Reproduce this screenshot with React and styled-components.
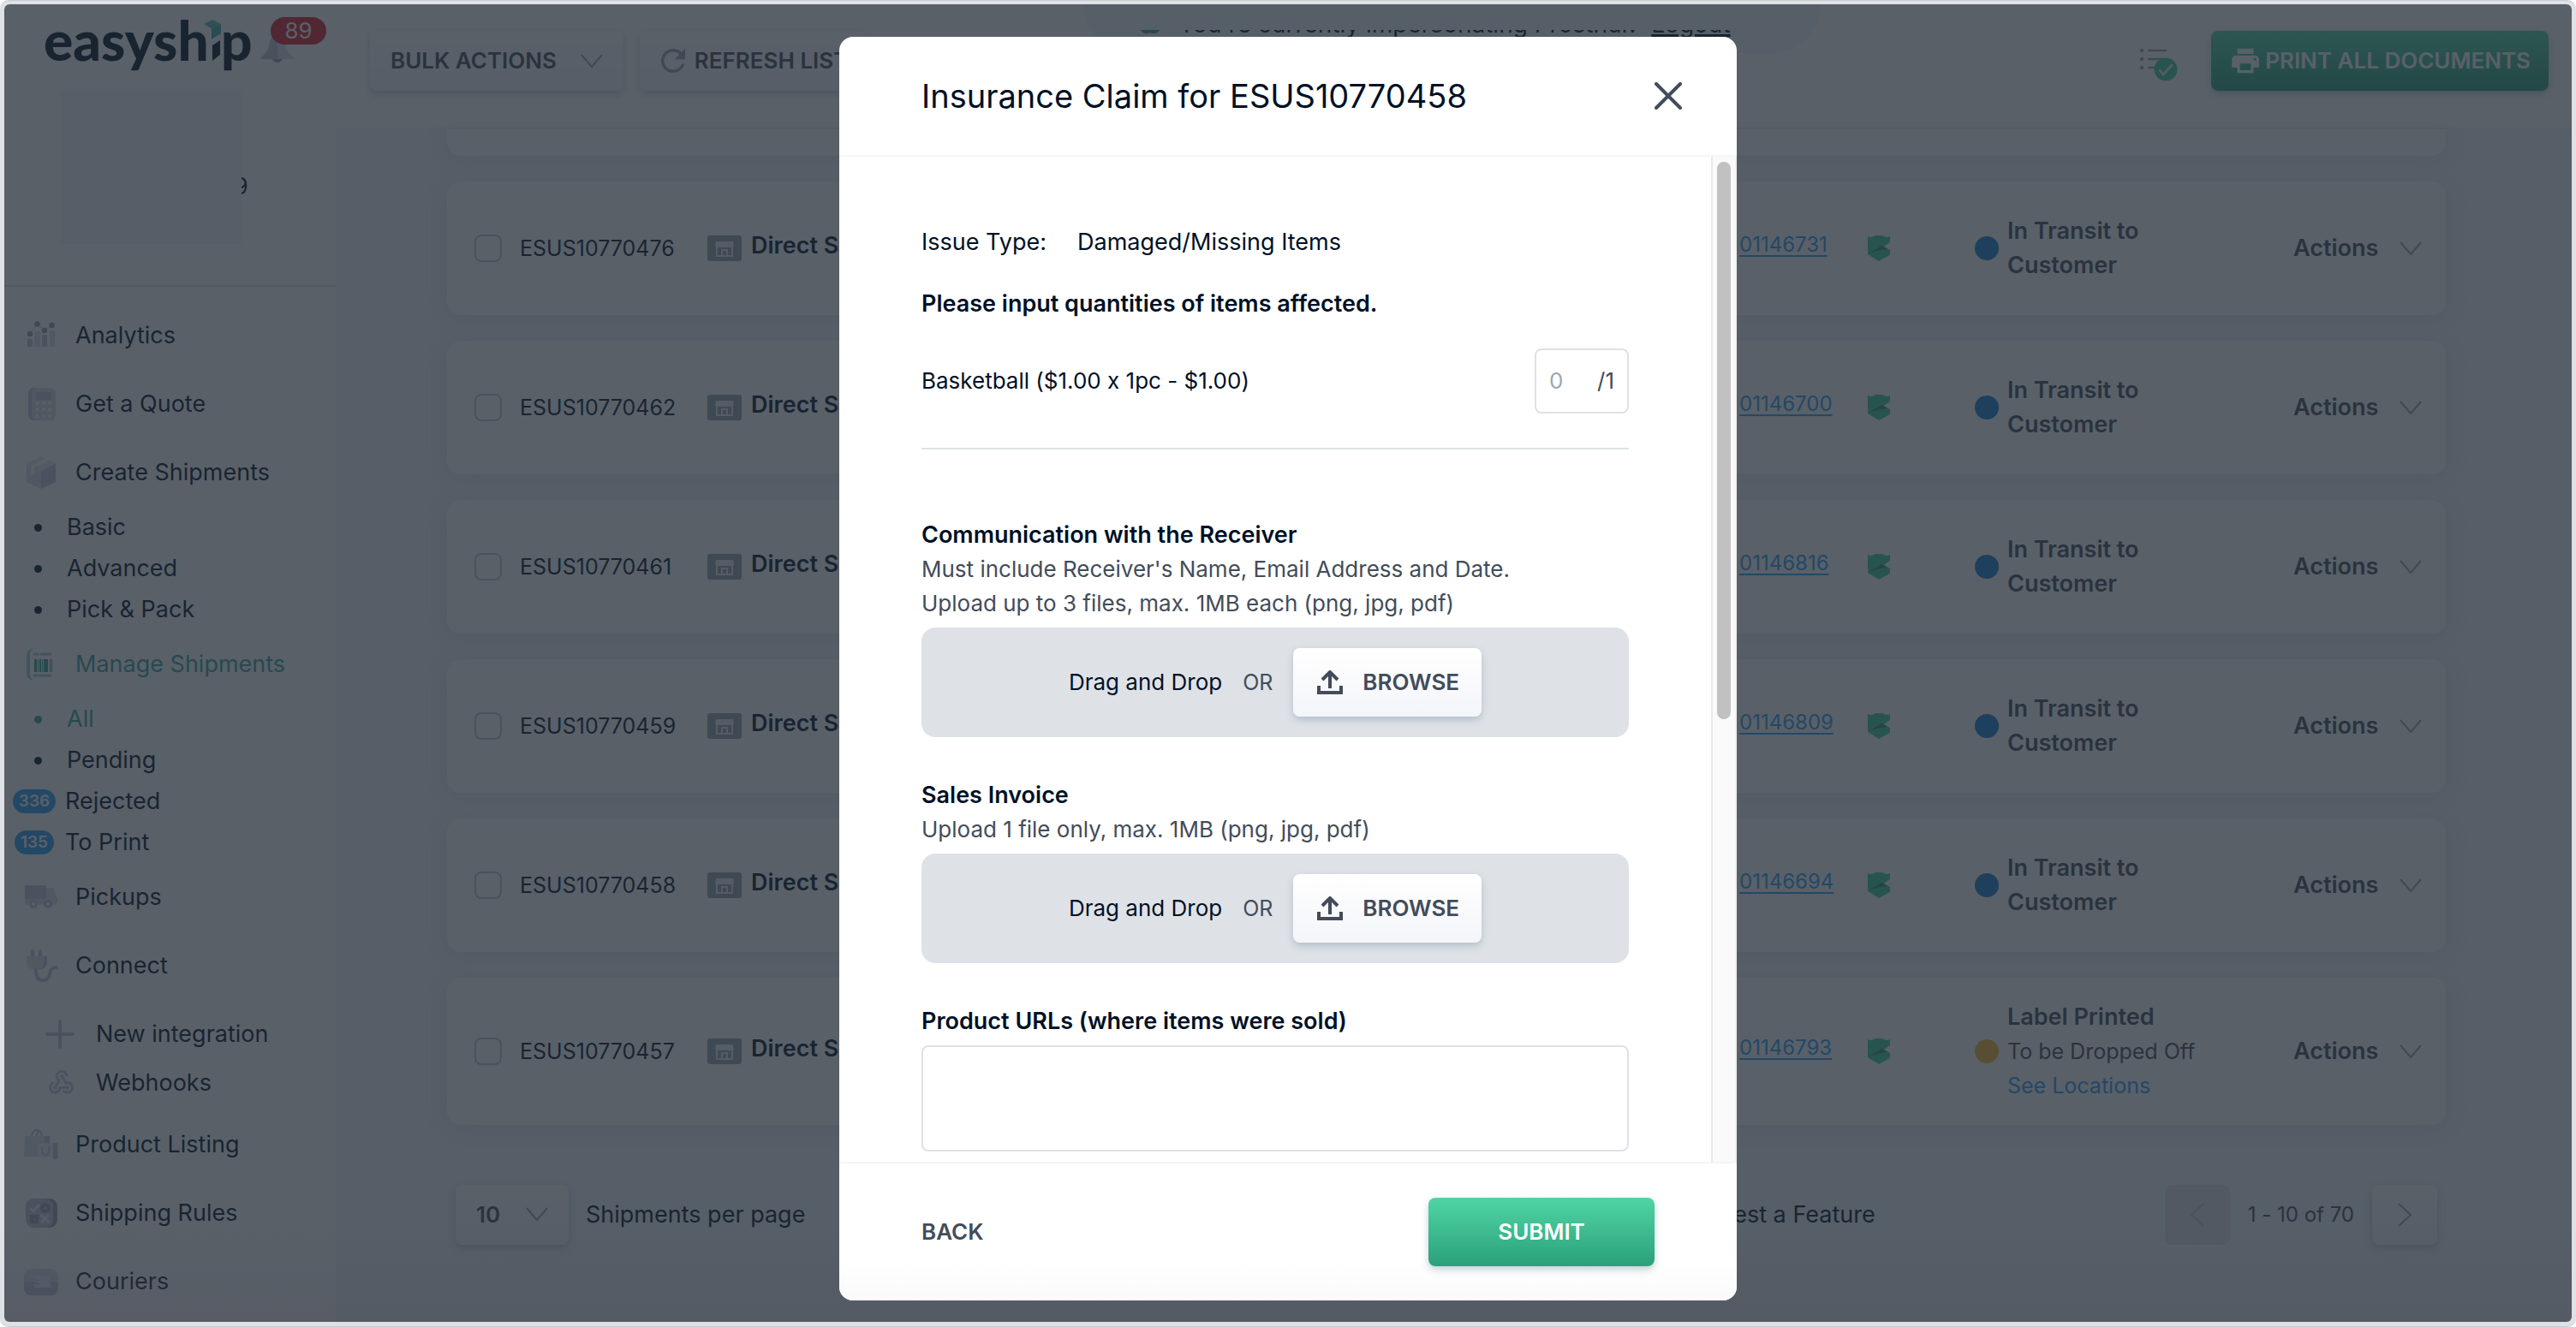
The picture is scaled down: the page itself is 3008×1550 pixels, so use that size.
import React, { Component } from 'react'
import styled, { createGlobalStyle, css } from 'styled-components'
import { MdPrint, MdRefresh, MdWebhook } from 'react-icons/md'

const dark = '#001126'
const body = '#434c5a'
const grey = '#98a4ac'
const soft = '#c8c4d8'
const pale = '#dcdee8'
const line = '#dee2e7'
const surface = '#f4f5fa'
const blue = '#2b9ef5'
const teal = '#39a399'
const green = '#3ecf9c'

const GlobalStyle = createGlobalStyle`
  * {
    box-sizing: border-box;
  }
  body {
    margin: 0;
    background: #fff;
    color: ${dark};
    font-family: Inter, 'Liberation Sans', sans-serif;
    font-size: 27px;
    font-feature-settings: 'calt' 0;
    line-height: 40px;
  }
  button, input, select, textarea {
    font: inherit;
    color: inherit;
  }
  ul {
    list-style: none;
    margin: 0;
    padding: 0;
  }
  svg {
    display: block;
    flex: none;
  }
`

/* ---------- frame ---------- */

const Frame = styled.div`
  height: 100vh;
  padding: 4px 5px 5px;
  border-top: 1px solid #c8ccd1;
  border-bottom: 1px solid #c8ccd1;
  border-radius: 10px;
  background: ${line};
`

const Screen = styled.div`
  position: relative;
  display: flex;
  height: 100%;
  overflow: hidden;
  border-radius: 6px;
  background: ${surface};
`

/* ---------- sidebar ---------- */

const Sidebar = styled.aside`
  flex: none;
  width: 387px;
  background: #fff;
`

const Account = styled.div`
  height: 330px;
  border-bottom: 2px solid #e4e6ee;
`

const LogoRow = styled.div`
  display: flex;
  height: 102px;
  padding-left: 45px;
`

const Bell = styled.button`
  position: relative;
  width: 90px;
  height: 72px;
  margin-left: 8px;
  padding: 30px 0 0;
  border: 0;
  background: none;
`

const BellCount = styled.span`
  position: absolute;
  top: 15px;
  left: 12px;
  width: 65px;
  border-radius: 16px;
  background: #e01c2c;
  color: #fff;
  font-size: 26px;
  line-height: 32px;
`

const Company = styled.div`
  display: flex;
  align-items: center;
  height: 178px;
  padding-left: 66px;
`

const CompanyCard = styled.div`
  position: relative;
  z-index: 1;
  width: 211px;
  height: 178px;
  background: ${surface};
`

const CompanyCode = styled.span`
  margin-left: -9px;
  padding-top: 44px;
`

const MenuLink = styled.a`
  display: flex;
  align-items: center;
  gap: ${p => (p.$nested ? 23 : 20)}px;
  height: ${p => (p.$nested ? 57 : 80)}px;
  padding-left: ${p => (p.$nested ? 44 : 23)}px;
  color: ${p => (p.$active ? teal : dark)};
  text-decoration: none;
`

const Menu = styled.ul`
  padding-top: 17px;
`

const SubLink = styled.a`
  display: flex;
  align-items: center;
  height: 48px;
  color: ${p => (p.$active ? teal : dark)};
  text-decoration: none;
`

const MarkerBox = styled.span`
  display: flex;
  justify-content: center;
  width: 70px;
  margin-right: ${p => (p.$count ? 1 : 3)}px;
`

const Bullet = styled.span`
  width: 9px;
  height: 9px;
  margin-left: 8px;
  border-radius: 50%;
  background: currentColor;
`

const Count = styled.span`
  padding: 0 7px;
  border-radius: 14px;
  background: ${blue};
  color: #fff;
  font-size: 19px;
  font-weight: 600;
  line-height: 28px;
`

const Integrations = styled.ul`
  padding: 11px 0 4px;
`

/* ---------- header ---------- */

const Main = styled.main`
  flex: 1;
  min-width: 0;
`

const Header = styled.header`
  display: flex;
  align-items: flex-start;
  gap: 19px;
  height: 146px;
  padding: 31px 27px 0 40px;
  border-bottom: 2px solid #f0f1f8;
  background: #fff;
`

const Spacer = styled.div`
  flex: 1;
`

const raised = css`
  border: 0;
  border-radius: 8px;
  background: linear-gradient(#fff, ${surface});
  box-shadow: 0 4px 8px rgba(130, 148, 168, 0.45);
`

const Button = styled.button`
  ${raised}
  display: flex;
  align-items: center;
  gap: ${p => p.$gap || 4}px;
  height: 70px;
  padding: 0 24px;
  color: ${body};
  font-size: 26px;
  font-weight: 600;
  white-space: nowrap;
`

const RefreshButton = styled(Button)`
  padding-left: 18px;
  svg {
    color: ${grey};
  }
`

const PrintButton = styled(Button)`
  padding: 0 21px;
  background: linear-gradient(#50d5a5, #2aa07a);
  color: #fff;
`

const IconButton = styled.button`
  margin-right: 19px;
  padding: 19px 0 0;
  border: 0;
  background: none;
`

const Banner = styled.div`
  position: absolute;
  top: 0;
  left: 50%;
  display: flex;
  gap: 20px;
  width: 860px;
  height: 57px;
  margin-left: -238px;
  padding: 3px 0 0 64px;
  border-radius: 0 0 60px 60px;
  background: ${surface};
  font-size: 28px;
  white-space: nowrap;
  svg {
    margin-top: 10px;
  }
  a {
    margin-left: 10px;
    color: ${dark};
    text-decoration-thickness: 3px;
  }
`

const BannerEdge = styled.span`
  position: absolute;
  top: 0;
  left: 24px;
  right: 24px;
  height: 30px;
  background: ${surface};
`

/* ---------- shipments ---------- */

const Shipments = styled.ul`
  display: flex;
  flex-direction: column;
  gap: 30px;
  padding: 0 147px 0 130px;
`

const Card = styled.li`
  display: grid;
  grid-template-columns: 53px 219px 51px 1fr 150px 125px 372px 150px;
  align-items: center;
  padding: 26px 28px 26px 32px;
  min-height: 156px;
  border-radius: 16px;
  background: #fff;
  box-shadow: 0 4px 24px rgba(150, 160, 185, 0.18);
`

const CardEnd = styled.li`
  height: 31px;
  border-radius: 0 0 16px 16px;
  background: #fff;
  box-shadow: 0 4px 24px rgba(150, 160, 185, 0.18);
`

const Checkbox = styled.input`
  appearance: none;
  width: 32px;
  height: 32px;
  margin: 0;
  border: 2px solid ${soft};
  border-radius: 8px;
`

const ShipmentId = styled.label`
  font-size: 25px;
`

const Store = styled.span`
  padding-bottom: 6px;
  font-weight: 600;
`

const Tracking = styled.a`
  padding-bottom: 8px;
  color: ${blue};
  font-size: 24px;
  text-underline-offset: 4px;
`

const Status = styled.div`
  display: flex;
  align-items: center;
  gap: 10px;
`

const Dot = styled.span`
  width: 28px;
  height: 28px;
  border-radius: 50%;
  background: ${p => p.$color};
`

const StatusText = styled.div`
  width: 240px;
  color: ${body};
  font-size: 25px;
  a {
    color: ${blue};
    text-decoration: none;
  }
`

const StatusTitle = styled.strong`
  display: block;
  width: 190px;
  font-size: 27px;
  font-weight: 600;
`

const Actions = styled.button`
  display: flex;
  align-items: center;
  justify-content: space-between;
  padding: 0;
  border: 0;
  background: none;
  color: ${body};
  font-size: 27px;
  font-weight: 600;
`

const Pager = styled.div`
  display: flex;
  align-items: center;
  padding: 70px 157px 0 140px;
`

const PerPage = styled.label`
  display: flex;
  align-items: center;
  gap: 20px;
`

const SelectWrap = styled.span`
  ${raised}
  position: relative;
  width: 132px;
  height: 70px;
  svg {
    position: absolute;
    right: 24px;
    top: 26px;
    pointer-events: none;
  }
`

const Select = styled.select`
  appearance: none;
  width: 100%;
  height: 100%;
  padding: 0 24px;
  border: 0;
  background: none;
  color: ${body};
  font-size: 26px;
  font-weight: 600;
`

const FeatureLink = styled.a`
  margin: 0 338px 0 auto;
  color: ${dark};
  text-decoration: none;
`

const PageRange = styled.span`
  padding: 0 21px;
  color: ${body};
  font-size: 24px;
`

const PageButton = styled.button`
  ${raised}
  display: flex;
  align-items: center;
  justify-content: center;
  width: 76px;
  height: 70px;
  color: ${grey};
  &:disabled {
    background: #e2e4ea;
    box-shadow: none;
    color: ${soft};
  }
`

/* ---------- modal ---------- */

const Overlay = styled.div`
  position: absolute;
  inset: 0;
  z-index: 2;
  display: flex;
  justify-content: center;
  padding: 38px 24px 25px;
  background:
    linear-gradient(to top, rgba(80, 76, 92, 0.2), rgba(80, 76, 92, 0) 110px),
    rgba(33, 43, 53, 0.75);
`

const Modal = styled.section`
  display: flex;
  flex-direction: column;
  width: 100%;
  max-width: 1048px;
  overflow: hidden;
  border-radius: 16px;
  background: #fff;
`

const ModalHeader = styled.header`
  display: flex;
  flex: none;
  align-items: center;
  justify-content: space-between;
  height: 140px;
  padding: 0 64px 0 96px;
  border-bottom: 2px solid #f4f5f6;
`

const Title = styled.h1`
  margin: 0;
  font-size: 38px;
  font-weight: 400;
  line-height: 48px;
`

const Close = styled.button`
  padding: 0;
  border: 0;
  background: none;
  color: ${body};
`

const ModalBody = styled.div`
  display: flex;
  flex: 1;
  min-height: 0;
  overflow: hidden;
`

const Form = styled.form`
  flex: 1;
  min-width: 0;
  padding: 80px 96px;
`

const ScrollTrack = styled.div`
  width: 30px;
  padding: 6px 6px 6px 5px;
  border-left: 2px solid #e8e8e8;
  border-right: 2px solid #f0f0f0;
  background: #fafafa;
`

const ScrollThumb = styled.div`
  width: 16px;
  height: 56%;
  border-radius: 8px;
  background: #c1c1c1;
`

const Issue = styled.p`
  display: flex;
  gap: 36px;
  margin: 0 0 32px;
`

const Strong = styled.strong`
  display: block;
  font-weight: 600;
`

const ItemRow = styled.div`
  display: flex;
  align-items: center;
  justify-content: space-between;
  margin-bottom: 80px;
  padding: 32px 0 40px;
  border-bottom: 2px solid ${line};
  font-size: 26px;
`

const Quantity = styled.span`
  display: flex;
  align-items: center;
  width: 110px;
  height: 76px;
  padding: 0 15px;
  border: 2px solid ${line};
  border-radius: 8px;
  color: ${body};
`

const QuantityInput = styled.input`
  flex: 1;
  min-width: 0;
  padding: 0;
  border: 0;
  background: none;
  &::placeholder {
    color: #9aa8b5;
  }
`

const Field = styled.div`
  margin-bottom: 48px;
`

const FieldLabel = styled.label`
  display: block;
  margin-bottom: 8px;
  font-weight: 600;
`

const Hint = styled.p`
  margin: 0;
  color: ${body};
  font-size: 26px;
`

const DropZone = styled.div`
  display: flex;
  align-items: center;
  justify-content: center;
  gap: 24px;
  height: 128px;
  margin-top: 8px;
  border-radius: 16px;
  background: ${line};
  font-size: 26px;
`

const Or = styled.span`
  color: ${body};
  font-size: 25px;
`

const Browse = styled(Button)`
  height: 80px;
  padding: 0 26px 0 28px;
`

const TextArea = styled.textarea`
  display: block;
  width: 100%;
  height: 124px;
  padding: 16px;
  border: 2px solid ${line};
  border-radius: 8px;
  background: #fff;
  resize: none;
`

const ModalFooter = styled.footer`
  display: flex;
  flex: none;
  align-items: center;
  justify-content: space-between;
  height: 162px;
  padding: 0 96px;
  border-top: 2px solid #f4f5f6;
  background: linear-gradient(#fff 70%, #fafafa);
`

const Back = styled.button`
  padding: 0;
  border: 0;
  background: none;
  color: ${body};
  font-size: 26px;
  font-weight: 600;
`

const Submit = styled(Button)`
  justify-content: center;
  width: 264px;
  height: 80px;
  background: linear-gradient(#50d5a5, #2aa07a);
  color: #fff;
`

/* ---------- drawings ---------- */

const Logo = () => (
  <svg width="246" height="90" viewBox="-2 -12 246 90" role="img" aria-label="easyship">
    <g fill={dark} fontFamily="Lato, sans-serif" fontWeight="900" fontSize="64">
      <text x="-1" y="54">easysh</text>
      <text x="206" y="54">p</text>
    </g>
    <path d="M196 36l9-6v17l-9 7z" fill={dark} />
    <path d="M186 11l10-5 10 5-10 6z" fill="#5fbdb6" />
    <path d="M195 17l11-6v11l-11 7z" fill="#43aaa8" />
  </svg>
)

const BellIcon = () => (
  <svg width="40" height="34" viewBox="0 0 40 34">
    <path d="M20 1v29H1c-2-3 7-5 9-15C11 7 14 1 20 1z" fill="#c4c4d4" />
    <path d="M20 1v29h19c2-3-7-5-9-15C29 7 26 1 20 1z" fill={pale} />
    <path d="M14 30h12q-2 4-6 4t-6-4z" fill={grey} />
  </svg>
)

const Chevron = () => (
  <svg width="26" height="16" viewBox="0 0 26 16" fill="none" stroke={grey} strokeWidth="2">
    <path d="M1 1l12 14L25 1" />
  </svg>
)

const PageArrow = ({ back }) => (
  <svg width="18" height="30" viewBox="0 0 18 30" fill="none" stroke="currentColor" strokeWidth="2">
    <path d={back ? 'M16 2L2 15l14 13' : 'M2 2l14 13L2 28'} />
  </svg>
)

const TasksIcon = () => (
  <svg width="46" height="40" viewBox="0 0 46 40">
    <g fill={grey}>
      <circle cx="3" cy="4" r="2.2" />
      <circle cx="3" cy="14" r="2.2" />
      <circle cx="3" cy="24" r="2.2" />
    </g>
    <path d="M11 4h20M11 14h16M11 24h8" stroke={grey} strokeWidth="2.4" strokeLinecap="round" />
    <circle cx="31" cy="26" r="13.5" fill={green} />
    <path d="M24 27l4 5 10-11" fill="none" stroke="#e8eaf0" strokeWidth="2.8" strokeLinecap="round" />
  </svg>
)

const StoreIcon = () => (
  <svg width="40" height="30" viewBox="0 0 40 30">
    <rect width="40" height="30" rx="3" fill={grey} />
    <path d="M10 7h20l1 6H9z" fill="#eceef3" />
    <path d="M10 12h20v13H10zm2 2v9h4v-7h8v7h4v-9zm6 4v5h4v-5z" fill="#eceef3" fillRule="evenodd" />
  </svg>
)

const ShieldIcon = () => (
  <svg width="26" height="30" viewBox="0 0 26 30">
    <path d="M0 1q4 2 7 0 3-2 6-1 3-1 6 1t7 0v5q0 3-3 4l-4 3 7 4v5q-1 2-4 3l-9 5L0 22z" fill={green} />
    <path d="M1 21l15-9 7 4q-11 1-22 5z" fill="#3f8a78" />
  </svg>
)

const UploadIcon = () => (
  <svg width="30" height="28" viewBox="0 0 30 28" fill="none" stroke="currentColor" strokeWidth="4">
    <path d="M2 18v8h26v-8" />
    <path d="M15 21V3" />
    <path d="M6 11l9-9 9 9" />
  </svg>
)

const CloseIcon = () => (
  <svg width="32" height="32" viewBox="0 0 32 32" stroke="currentColor" strokeWidth="4" strokeLinecap="round">
    <path d="M2 2l28 28M30 2L2 30" />
  </svg>
)

const icons = {
  analytics: (
    <>
      <path d="M7 18l8-11 9 7 9-6" stroke={soft} fill="none" />
      <path d="M4 24h6v9H4zM21 19h6v14h-6z" fill={soft} />
      <path d="M12 15h7v18h-7zM30 14h6v19h-6z" fill={pale} />
      <g fill={grey}>
        <circle cx="7" cy="18" r="3.2" />
        <circle cx="15.5" cy="6.5" r="3.2" />
        <circle cx="24" cy="14" r="3.2" />
        <circle cx="32.5" cy="8" r="3.2" />
      </g>
    </>
  ),
  quote: (
    <>
      <rect x="5" y="1" width="30" height="38" rx="6" fill={soft} />
      <rect x="9" y="1" width="28" height="38" rx="6" fill={pale} />
      <rect x="14" y="6" width="18" height="9" rx="1" fill={soft} />
      <path d="M15.5 19h0M23 19h0M30 19h0M15.5 26h0M23 26h0M30 26h0M15.5 34h0M23 34h0M30 34h0" stroke="#fff" strokeWidth="4" strokeLinecap="round" />
    </>
  ),
  create: (
    <>
      <path d="M3 9l17-8 17 8-17 11z" fill="#e6e7ee" />
      <path d="M3 9l17 10v20L3 31z" fill={pale} />
      <path d="M37 9L20 19v20l17-8z" fill={soft} />
      <path d="M10 22v-7q0-2 2-3L29 4" fill="none" stroke="#fff" strokeWidth="3.5" />
    </>
  ),
  manage: (
    <>
      <path d="M11 1q-8 1-8 9v20q0 8 8 9-4-3-4-9V10q0-6 4-9z" fill="#9fd2cd" />
      <path d="M12 8h4M20 8h11M12 33h19" stroke="#9fd2cd" strokeWidth="3" strokeLinecap="round" />
      <path d="M12 14h3v15h-3zM16 14h1v15h-1zM18 14h2v15h-2zM21 14h1v15h-1zM23 14h5v15h-5zM30 14h1v15h-1zM32 14h1v15h-1z" fill={teal} />
    </>
  ),
  pickups: (
    <>
      <path d="M2 22h36v6q0 1-2 1H1v-4z" fill={pale} />
      <path d="M26 9h8l5 12v5H26z" fill={pale} />
      <rect x="1" y="6" width="25" height="16" rx="2" fill={soft} />
      <circle cx="11" cy="28" r="3.5" fill="#fff" stroke={soft} strokeWidth="3" />
      <circle cx="28" cy="28" r="3.5" fill="#fff" stroke={soft} strokeWidth="3" />
    </>
  ),
  connect: (
    <>
      <path d="M10 3v8M19 3v8" stroke={soft} strokeWidth="4" strokeLinecap="round" />
      <path d="M3 9h24v5q0 11-12 11T3 14z" fill={pale} />
      <path d="M23 9h4v5q0 8-7 10 3-3 3-9z" fill={soft} />
      <path d="M14 25v4q1 8 8 8t8-8q1-7 8-7" fill="none" stroke={soft} strokeWidth="4" strokeLinecap="round" />
    </>
  ),
  products: (
    <>
      <path d="M9 10q1-7 6-7t6 7M15 10q0-6 4-6" fill="none" stroke={soft} strokeWidth="2" />
      <path d="M1 10h23v8h-7l-1 16H0z" fill={pale} />
      <path d="M24 10h6v8h-6z" fill={soft} />
      <path d="M34 18h5l1 18q-4 3-6-1z" fill={soft} />
      <path d="M17 18h17v17H16z" fill="#eceef3" />
      <path d="M21 22v6q0 4 4 4t4-4v-6" fill="none" stroke={soft} strokeWidth="1.5" />
    </>
  ),
  rules: (
    <>
      <rect x="8" y="3" width="31" height="34" rx="9" fill={grey} />
      <rect x="2" y="3" width="32" height="34" rx="9" fill={soft} />
      <path d="M7 14l4 4 7-8M20 22l9 9M29 22l-9 9" fill="none" stroke="#eceef3" strokeWidth="3" />
      <circle cx="25" cy="14" r="4" fill="none" stroke={grey} strokeWidth="4" />
      <path d="M9 24h6v6H9z" fill="none" stroke={grey} strokeWidth="4" />
    </>
  ),
  couriers: (
    <>
      <rect x="0" y="5" width="40" height="31" rx="9" fill={pale} />
      <path d="M0 20h40v7q0 9-9 9H9q-9 0-9-9z" fill={soft} />
      <path d="M6 13h23l3 14H13l-3-4h10l-10-3 9-1z" fill="#eceef3" />
    </>
  ),
  plus: <path d="M21 5v30M6 20h30" stroke={soft} strokeWidth="4" strokeLinecap="round" />
}

const Icon = ({ name }) => (
  <svg width="40" height="40" viewBox="0 0 40 40">
    {name === 'webhooks' ? <MdWebhook x="5" y="2" size={35} color={soft} /> : icons[name]}
  </svg>
)

/* ---------- data ---------- */

const menu = [
  { icon: 'analytics', title: 'Analytics' },
  { icon: 'quote', title: 'Get a Quote' },
  { icon: 'create', title: 'Create Shipments', items: [{ title: 'Basic' }, { title: 'Advanced' }, { title: 'Pick & Pack' }] },
  {
    icon: 'manage',
    title: 'Manage Shipments',
    active: true,
    items: [{ title: 'All', active: true }, { title: 'Pending' }, { title: 'Rejected', count: 336 }, { title: 'To Print', count: 135 }]
  },
  { icon: 'pickups', title: 'Pickups' },
  { icon: 'connect', title: 'Connect', integrations: [{ icon: 'plus', title: 'New integration' }, { icon: 'webhooks', title: 'Webhooks' }] },
  { icon: 'products', title: 'Product Listing' },
  { icon: 'rules', title: 'Shipping Rules' },
  { icon: 'couriers', title: 'Couriers' }
]

const shipments = [
  { id: 'ESUS10770476', tracking: '01146731' },
  { id: 'ESUS10770462', tracking: '01146700' },
  { id: 'ESUS10770461', tracking: '01146816' },
  { id: 'ESUS10770459', tracking: '01146809' },
  { id: 'ESUS10770458', tracking: '01146694' },
  { id: 'ESUS10770457', tracking: '01146793', printed: true }
]

const uploads = [
  {
    title: 'Communication with the Receiver',
    hints: ["Must include Receiver's Name, Email Address and Date.", 'Upload up to 3 files, max. 1MB each (png, jpg, pdf)']
  },
  { title: 'Sales Invoice', hints: ['Upload 1 file only, max. 1MB (png, jpg, pdf)'] }
]

/* ---------- components ---------- */

const SideMenu = () => (
  <Menu>
    {menu.map(entry => (
      <li key={entry.title}>
        <MenuLink href="#" $active={entry.active}>
          <Icon name={entry.icon} />
          {entry.title}
        </MenuLink>
        {entry.items && (
          <ul>
            {entry.items.map(item => (
              <li key={item.title}>
                <SubLink href="#" $active={item.active}>
                  <MarkerBox $count={item.count}>
                    {item.count ? <Count>{item.count}</Count> : <Bullet />}
                  </MarkerBox>
                  {item.title}
                </SubLink>
              </li>
            ))}
          </ul>
        )}
        {entry.integrations && (
          <Integrations>
            {entry.integrations.map(item => (
              <li key={item.title}>
                <MenuLink href="#" $nested>
                  <Icon name={item.icon} />
                  {item.title}
                </MenuLink>
              </li>
            ))}
          </Integrations>
        )}
      </li>
    ))}
  </Menu>
)

const ShipmentCard = ({ id, tracking, printed }) => (
  <Card>
    <Checkbox type="checkbox" id={id} />
    <ShipmentId htmlFor={id}>{id}</ShipmentId>
    <StoreIcon />
    <Store>Direct Sale</Store>
    <Tracking href="#">{tracking}</Tracking>
    <ShieldIcon />
    <Status>
      <Dot $color={printed ? '#fcb830' : '#1480d0'} />
      {printed ? (
        <StatusText>
          <StatusTitle>Label Printed</StatusTitle>
          To be Dropped Off
          <br />
          <a href="#">See Locations</a>
        </StatusText>
      ) : (
        <StatusText>
          <StatusTitle>In Transit to Customer</StatusTitle>
        </StatusText>
      )}
    </Status>
    <Actions type="button">
      Actions
      <Chevron />
    </Actions>
  </Card>
)

const Upload = ({ title, hints }) => (
  <Field>
    <Strong>{title}</Strong>
    {hints.map(hint => <Hint key={hint}>{hint}</Hint>)}
    <DropZone>
      <span>Drag and Drop</span>
      <Or>OR</Or>
      <Browse type="button" $gap={23}>
        <UploadIcon />
        BROWSE
      </Browse>
    </DropZone>
  </Field>
)

const ClaimModal = () => (
  <Overlay>
    <Modal role="dialog" aria-labelledby="claim-title">
      <ModalHeader>
        <Title id="claim-title">Insurance Claim for ESUS10770458</Title>
        <Close type="button" aria-label="Close"><CloseIcon /></Close>
      </ModalHeader>
      <ModalBody>
        <Form id="claim">
          <Issue>
            <span>Issue Type:</span>
            <span>Damaged/Missing Items</span>
          </Issue>
          <Strong>Please input quantities of items affected.</Strong>
          <ItemRow>
            <label htmlFor="quantity">Basketball ($1.00 x 1pc - $1.00)</label>
            <Quantity>
              <QuantityInput id="quantity" type="text" placeholder="0" />
              /1
            </Quantity>
          </ItemRow>
          {uploads.map(upload => <Upload key={upload.title} {...upload} />)}
          <FieldLabel htmlFor="urls">Product URLs (where items were sold)</FieldLabel>
          <TextArea id="urls" />
        </Form>
        <ScrollTrack>
          <ScrollThumb />
        </ScrollTrack>
      </ModalBody>
      <ModalFooter>
        <Back type="button">BACK</Back>
        <Submit type="submit" form="claim">SUBMIT</Submit>
      </ModalFooter>
    </Modal>
  </Overlay>
)

class App extends Component {
  render () {
    return (
      <Frame>
        <GlobalStyle />
        <Screen>
          <Sidebar>
            <Account>
              <LogoRow>
                <Logo />
                <Bell type="button" aria-label="Notifications">
                  <BellIcon />
                  <BellCount>89</BellCount>
                </Bell>
              </LogoRow>
              <Company>
                <CompanyCard />
                <CompanyCode>9</CompanyCode>
              </Company>
            </Account>
            <SideMenu />
          </Sidebar>
          <Main>
            <Header>
              <Button type="button" $gap={28}>
                BULK ACTIONS
                <Chevron />
              </Button>
              <RefreshButton type="button">
                <MdRefresh size={42} />
                REFRESH LIST
              </RefreshButton>
              <Spacer />
              <IconButton type="button" aria-label="Tasks"><TasksIcon /></IconButton>
              <PrintButton type="button">
                <MdPrint size={38} />
                PRINT ALL DOCUMENTS
              </PrintButton>
            </Header>
            <Banner>
              <svg width="26" height="22" viewBox="0 0 26 22">
                <path d="M1 4q6-6 12 0 6-6 12 0v12q-5 8-12 4-7 4-12-4z" fill={teal} />
              </svg>
              <span>
                You're currently impersonating Prosthur. <a href="#">Logout</a>
              </span>
              <BannerEdge />
            </Banner>
            <Shipments>
              <CardEnd />
              {shipments.map(shipment => <ShipmentCard key={shipment.id} {...shipment} />)}
            </Shipments>
            <Pager>
              <PerPage>
                <SelectWrap>
                  <Select defaultValue="10">
                    <option>10</option>
                    <option>25</option>
                    <option>50</option>
                  </Select>
                  <Chevron />
                </SelectWrap>
                Shipments per page
              </PerPage>
              <FeatureLink href="#">Request a Feature</FeatureLink>
              <PageButton type="button" aria-label="Previous page" disabled><PageArrow back /></PageButton>
              <PageRange>1 - 10 of 70</PageRange>
              <PageButton type="button" aria-label="Next page"><PageArrow /></PageButton>
            </Pager>
          </Main>
          <ClaimModal />
        </Screen>
      </Frame>
    )
  }
}

export default App
